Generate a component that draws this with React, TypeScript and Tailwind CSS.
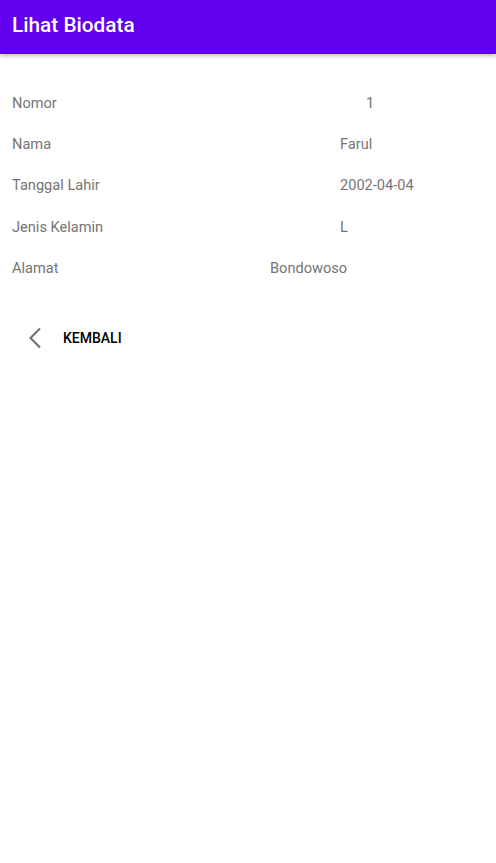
const rows = [
  {label: 'Nomor', value: '1', offset: 'pl-[96px]'},
  {label: 'Nama', value: 'Farul', offset: 'pl-[70px]'},
  {label: 'Tanggal Lahir', value: '2002-04-04', offset: 'pl-[70px]'},
  {label: 'Jenis Kelamin', value: 'L', offset: 'pl-[70px]'},
  {label: 'Alamat', value: 'Bondowoso', offset: 'pl-0'},
];

export default function App() {
  return (
    <div className="min-h-[863px] bg-white font-['Roboto',sans-serif]">
      <div className="h-[54px] bg-[#6200ee] flex items-center px-3 pb-[2px] shadow-[0_2px_4px_rgba(0,0,0,0.25)]">
        <h1 className="text-white text-[20.8px] font-medium">Lihat Biodata</h1>
      </div>

      <div className="pt-[29px] px-3">
        {rows.map((r) => (
          <div key={r.label} className="h-[41.3px] flex items-center text-[14.6px] text-[#757575]">
            <span className="w-[258px]">{r.label}</span>
            <span className={r.offset}>{r.value}</span>
          </div>
        ))}
      </div>

      <button className="mt-[25px] ml-[16px] h-[48px] flex items-center gap-[21px] px-3">
        <svg width="14" height="22" viewBox="0 0 14 22" fill="none">
          <path d="M12 1.5 L2.5 11 L12 20.5" stroke="#757575" strokeWidth="2.2" />
        </svg>
        <span className="text-[14px] font-medium text-black">KEMBALI</span>
      </button>
    </div>
  );
}
